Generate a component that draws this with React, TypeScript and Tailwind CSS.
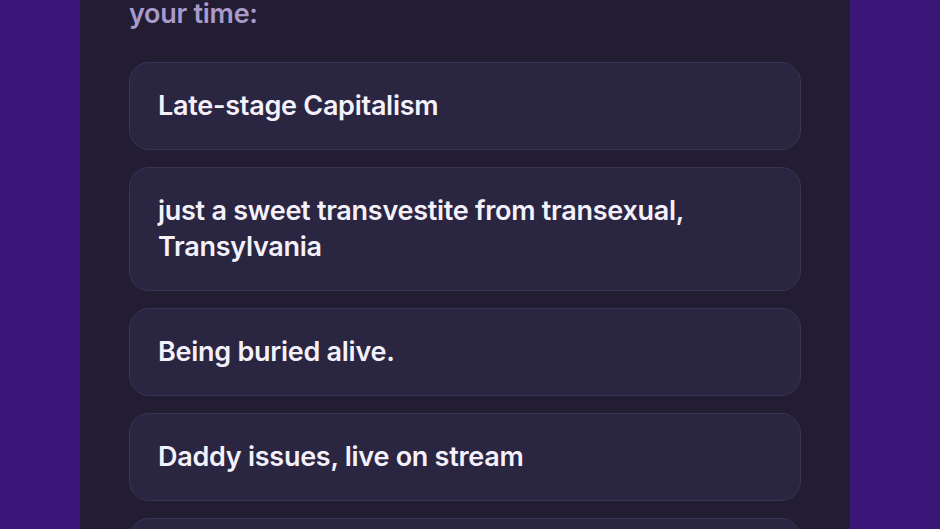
import React from 'react';

const answers = [
  'Late-stage Capitalism',
  'just a sweet transvestite from transexual, Transylvania',
  'Being buried alive.',
  'Daddy issues, live on stream',
  '\u00a0',
];

export default function App() {
  return (
    <div className="w-[940px] h-[529px] overflow-hidden bg-[#3b1679] flex">
      <div
        className="ml-[80px] w-[770px] h-full bg-[#221d33] px-[49px] flex flex-col"
        style={{ fontFamily: 'Inter, "Noto Sans", sans-serif' }}
      >
        <p className="text-[27px] leading-[28px] font-semibold text-[#a89bcb] tracking-[-0.01em]">
          your time:
        </p>
        <div className="mt-[34px] flex flex-col gap-[17px]">
          {answers.map((a, i) => (
            <button
              key={i}
              type="button"
              className="w-full text-left rounded-[20px] bg-[#2a2541] border border-[#3a3453] px-[28px] py-[25px] text-[27px] leading-[36px] font-semibold text-[#f4f1fb] tracking-[-0.01em]"
            >
              {a}
            </button>
          ))}
        </div>
      </div>
    </div>
  );
}
